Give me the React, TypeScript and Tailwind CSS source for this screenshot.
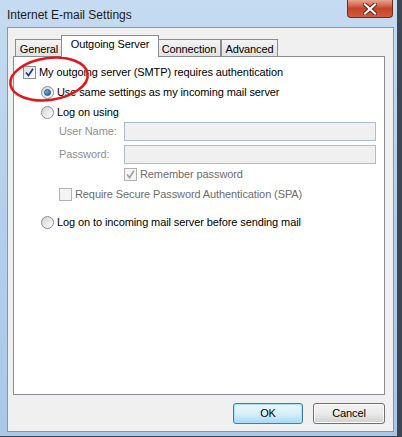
import React from "react"

const font = { fontFamily: '"Liberation Sans", Arial, sans-serif' }

function CheckBox({ checked, disabled }: { checked?: boolean; disabled?: boolean }) {
  return (
    <span
      className={`flex h-[13px] w-[13px] shrink-0 items-center justify-center border ${
        disabled ? "border-[#b1b1b1] bg-[#f4f4f4]" : "border-[#8e8f8f] bg-gradient-to-br from-[#dcdcdc] to-[#ffffff]"
      }`}
    >
      {checked && (
        <svg width="9" height="9" viewBox="0 0 9 9">
          <path
            d="M1 4.5 L3.5 7.5 L8 0.8"
            fill="none"
            stroke={disabled ? "#a0a0a0" : "#21398c"}
            strokeWidth="1.7"
          />
        </svg>
      )}
    </span>
  )
}

function Radio({ checked }: { checked?: boolean }) {
  return (
    <span className="flex h-[13px] w-[13px] shrink-0 items-center justify-center rounded-full border border-[#8e8f8f] bg-gradient-to-br from-[#d2d2d2] to-[#ffffff]">
      {checked && (
        <span className="h-[7px] w-[7px] rounded-full border border-[#1c5180] bg-gradient-to-br from-[#7ec9f5] to-[#1a5c95]" />
      )}
    </span>
  )
}

const tabs = [
  { label: "General", w: "w-[48px]" },
  { label: "Outgoing Server", w: "w-[98px]" },
  { label: "Connection", w: "w-[64px]" },
  { label: "Advanced", w: "w-[57px]" },
]

export default function App() {
  return (
    <div
      className="relative h-[437px] w-[402px] overflow-hidden bg-[#3d4654] text-[11px] tracking-[-0.1px] text-black"
      style={font}
    >
      {/* window frame */}
      <div className="flex h-[436px] w-[397px] flex-col bg-gradient-to-b from-[#c5dbf1] via-[#b3cfeb] to-[#a9c8e8]">
        {/* title bar */}
        <div className="flex h-[27px] shrink-0 items-start justify-between">
          <span className="ml-[7px] mt-[6px] text-[12px] tracking-normal text-[#1b1b1b]">Internet E-mail Settings</span>
          <div className="mr-[4px] flex h-[18px] w-[46px] items-center justify-center rounded-b-[4px] border border-t-0 border-[#6f2b20] bg-gradient-to-b from-[#e8a493] via-[#c7432a] to-[#d35a3e]">
            <svg width="14" height="12" viewBox="0 0 14 12">
              <path d="M2 1.5 L12 10.5 M12 1.5 L2 10.5" stroke="#5a2218" strokeWidth="4" strokeLinecap="square" />
              <path d="M2 1.5 L12 10.5 M12 1.5 L2 10.5" stroke="#ffffff" strokeWidth="2.2" strokeLinecap="square" />
            </svg>
          </div>
        </div>

        {/* client area */}
        <div className="ml-[7px] mr-[3px] flex h-[405px] flex-col border border-[#8896a8] bg-[#f0f0f0] pl-[5px]">
          {/* tab strip */}
          <div className="mt-[7px] flex h-[21px] items-end pl-[2px]">
            {tabs.map((t) => {
              const active = t.label === "Outgoing Server"
              return active ? (
                <div
                  key={t.label}
                  className={`relative z-10 -mx-[2px] -mb-px flex h-[22px] items-center justify-center border border-b-0 border-[#898c95] bg-white pb-[4px] ${t.w}`}
                >
                  {t.label}
                </div>
              ) : (
                <div
                  key={t.label}
                  className={`flex h-[17px] items-center justify-center border border-b-0 border-[#898c95] bg-gradient-to-b from-[#f3f3f3] to-[#e3e3e3] pt-[2px] ${t.w}`}
                >
                  {t.label}
                </div>
              )
            })}
          </div>

          {/* tab panel */}
          <div className="flex h-[339px] w-[372px] flex-col border border-[#898c95] bg-white pt-[6px]">
            <div className="flex h-[19px] items-center gap-[3px] pl-[9px]">
              <CheckBox checked />
              <span>My outgoing server (SMTP) requires authentication</span>
            </div>
            <div className="flex h-[20px] items-center gap-[3px] pl-[27px]">
              <Radio checked />
              <span>Use same settings as my incoming mail server</span>
            </div>
            <div className="flex h-[20px] items-center gap-[3px] pl-[27px]">
              <Radio />
              <span>Log on using</span>
            </div>
            <div className="flex h-[19px] items-center pl-[45px] text-[#8f8f8f]">
              <span className="w-[65px]">User Name:</span>
              <div className="h-[19px] w-[252px] border border-[#abbdd3] bg-[#f0f0f0]" />
            </div>
            <div className="mt-[4px] flex h-[19px] items-center pl-[45px] text-[#8f8f8f]">
              <span className="w-[65px]">Password:</span>
              <div className="h-[19px] w-[252px] border border-[#abbdd3] bg-[#f0f0f0]" />
            </div>
            <div className="mt-px flex h-[19px] items-center gap-[3px] pl-[110px] text-[#6d6d6d]">
              <CheckBox checked disabled />
              <span>Remember password</span>
            </div>
            <div className="flex h-[20px] items-center gap-[3px] pl-[45px] text-[#6d6d6d]">
              <CheckBox disabled />
              <span>Require Secure Password Authentication (SPA)</span>
            </div>
            <div className="mt-[8px] flex h-[20px] items-center gap-[3px] pl-[27px]">
              <Radio />
              <span>Log on to incoming mail server before sending mail</span>
            </div>
          </div>

          {/* buttons */}
          <div className="mt-[8px] flex w-[372px] justify-end gap-[10px]">
            <button className="h-[21px] w-[70px] rounded-[3px] border border-[#3c7fb1] bg-gradient-to-b from-[#eaf6fd] via-[#d9f0fc] to-[#a7d9f5] shadow-[inset_0_0_0_1px_#a6e1fb]">
              OK
            </button>
            <button className="h-[21px] w-[72px] rounded-[3px] border border-[#707070] bg-gradient-to-b from-[#f2f2f2] via-[#ebebeb] to-[#cfcfcf] shadow-[inset_0_0_0_1px_#fcfcfc]">
              Cancel
            </button>
          </div>
        </div>
      </div>

      {/* red annotation circle */}
      <svg className="pointer-events-none absolute left-0 top-0" width="402" height="437">
        <ellipse cx="49" cy="79" rx="39" ry="21" fill="none" stroke="#e3161b" strokeWidth="2.5" transform="rotate(-8 49 79)" />
      </svg>
    </div>
  )
}
